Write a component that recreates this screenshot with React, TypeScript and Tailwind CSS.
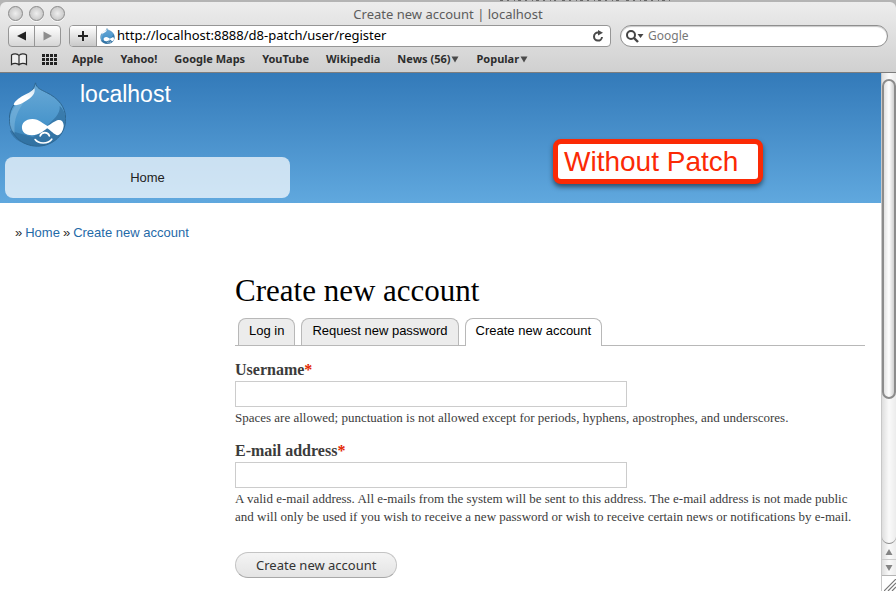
import type { ReactNode } from "react";

const bookmarks: { label: string; menu?: boolean }[] = [
  { label: "Apple" },
  { label: "Yahoo!" },
  { label: "Google Maps" },
  { label: "YouTube" },
  { label: "Wikipedia" },
  { label: "News (56)", menu: true },
  { label: "Popular", menu: true },
];

const tabs = [
  { label: "Log in", active: false },
  { label: "Request new password", active: false },
  { label: "Create new account", active: true },
];

function Druplicon({ className, id }: { className: string; id: string }) {
  return (
    <svg viewBox="27 20 172 195" className={className} aria-hidden="true">
      <defs>
        <linearGradient id={id} x1="0" y1="0" x2="0" y2="1">
          <stop offset="0" stopColor="#6aa9d6" />
          <stop offset="0.6" stopColor="#4a96cc" />
          <stop offset="1" stopColor="#3a80b4" />
        </linearGradient>
        <linearGradient id={id + "-shine"} x1="0.8" y1="0" x2="0.2" y2="1">
          <stop offset="0" stopColor="#d5e7f4" />
          <stop offset="0.5" stopColor="#ffffff" />
        </linearGradient>
      </defs>
      <path
        d="M107 22C110 38 122 42 140 51C176 68 198 95 198 130C198 178 160 213 113 213C65 213 28 178 28 130C28 98 48 75 75 62C92 52 102 42 107 22Z"
        fill={"url(#" + id + ")"}
        stroke="#2d6690"
        strokeWidth="3"
      />
      <path d="M180 91C183 118 158 134 142 152L100 186L29 166C40 196 74 212 113 212C160 212 197 178 197 130C197 115 191 101 180 91Z" fill="#2b6896" opacity="0.6" />
      <path d="M30 150C26 105 50 82 80 68C60 100 40 120 44 175C36 168 32 160 30 150Z" fill="#8bbfe0" opacity="0.45" />
      <path d="M104 38C96 48 80 55 65 63C50 72 42 82 41 88C50 92 64 86 79 76C95 66 108 54 104 38Z" fill={"url(#" + id + "-shine)"} />
      <path
        d="M98 131C75 131 66 145 66 156C66 172 78 180 96 180C118 180 130 168 142 159C152 164 164 180 174 180C186 178 192 160 192 150C191 138 185 133 176 134C166 135 153 148 143 152C130 146 118 131 98 131Z"
        fill="#fff"
      />
      <path d="M121 182C126 169 144 169 149 182" fill="none" stroke="#fff" strokeWidth="5" strokeLinecap="round" />
      <path d="M106 193C116 207 145 207 156 192" fill="none" stroke="#fff" strokeWidth="5" strokeLinecap="round" />
    </svg>
  );
}

function BrowserChrome() {
  return (
    <div className="bg-[#b4b4b4]">
      <svg viewBox="0 0 896 2" preserveAspectRatio="none" className="block h-0.5 w-full" aria-hidden="true">
        <path d="M500 0.5H556M562 0.5H620M626 0.5H670" stroke="#666" strokeWidth="1" strokeDasharray="3 4 2 5 1 3" />
      </svg>
      <header className="rounded-t-md border-b border-[#7d7d7d] bg-linear-to-b from-[#ededed] to-[#d0d0d0] font-['Noto_Sans',sans-serif]">
        <div className="relative flex h-[23px] items-center gap-1.5 pl-2">
          {["Close", "Minimise", "Zoom"].map((name) => (
            <button
              key={name}
              type="button"
              aria-label={name}
              className="size-[15px] rounded-full border border-[#8a8a8a] bg-radial from-[#eeeeee] to-[#bcbcbc] shadow-[0_1px_0_#fafafa]"
            />
          ))}
          <div className="pointer-events-none absolute inset-x-0 text-center text-[13px] leading-4 text-[#5c5c5c]">
            Create new account | localhost
          </div>
        </div>

        <div className="flex items-center px-2">
          <div className="flex h-[22px] w-[53px] rounded border border-[#969696] bg-linear-to-b from-white to-[#d6d6d6]">
            <button type="button" aria-label="Back" className="flex flex-1 items-center justify-center border-r border-[#969696]">
              <svg viewBox="0 0 10 10" className="size-2.5" aria-hidden="true"><path d="M0 5L9 0.5V9.5Z" fill="#222" /></svg>
            </button>
            <button type="button" aria-label="Forward" className="flex flex-1 items-center justify-center">
              <svg viewBox="0 0 10 10" className="size-2.5" aria-hidden="true"><path d="M9 5L0.5 0.5V9.5Z" fill="#8d8d8d" /></svg>
            </button>
          </div>
          <form className="ml-2 flex h-[22px] min-w-0 flex-1 overflow-hidden rounded border border-[#969696] bg-white">
            <button type="button" aria-label="Add bookmark" className="flex w-[27px] items-center justify-center border-r border-[#969696] bg-linear-to-b from-white to-[#c9c9c9]">
              <svg viewBox="0 0 10 10" className="size-2.5" aria-hidden="true"><path d="M5 0V10M0 5H10" stroke="#222" strokeWidth="2" /></svg>
            </button>
            <Druplicon id="favicon" className="ml-[3px] h-4 w-[15px] self-center" />
            <input
              type="text"
              aria-label="Address"
              defaultValue="http://localhost:8888/d8-patch/user/register"
              className="ml-0.5 min-w-0 flex-1 text-[13px] text-black outline-none"
            />
            <button type="button" aria-label="Reload" className="mr-1 flex w-4 items-center justify-center">
              <svg viewBox="0 0 12 12" className="size-3" aria-hidden="true">
                <path d="M7 2.6H6A4 4 0 1 0 10 7" fill="none" stroke="#4a4a4a" strokeWidth="2" />
                <path d="M6 0L11 2.8L6 5.6Z" fill="#4a4a4a" />
              </svg>
            </button>
          </form>
          <label className="ml-[9px] flex h-[22px] w-[268px] items-center rounded-full border border-[#8f8f8f] bg-white pl-[5px] shadow-[inset_0_1px_1px_#c8c8c8]">
            <svg viewBox="0 0 18 13" className="h-[13px] w-[18px]" aria-hidden="true">
              <circle cx="5" cy="5" r="4" fill="none" stroke="#444" strokeWidth="2" />
              <path d="M8 8L12 12" stroke="#444" strokeWidth="2.4" />
              <path d="M11.5 4H17.5L14.5 8Z" fill="#444" />
            </svg>
            <input type="text" aria-label="Search Google" placeholder="Google" className="ml-1 min-w-0 flex-1 text-xs outline-none placeholder:text-[#777]" />
          </label>
        </div>

        <nav className="flex h-[25px] items-center pl-2.5 text-[11px] font-bold text-[#2d2d2d]">
          <button type="button" aria-label="Show all bookmarks">
            <svg viewBox="0 0 18 13" className="h-[13px] w-[18px]" aria-hidden="true">
              <path d="M9 2.5C7.5 0.5 3.5 0.5 1.5 2V11.5C3.5 10 7.5 10 9 12C10.5 10 14.5 10 16.5 11.5V2C14.5 0.5 10.5 0.5 9 2.5V12" fill="#eee" stroke="#2d2d2d" strokeWidth="1.2" />
            </svg>
          </button>
          <button type="button" aria-label="Top sites" className="ml-3.5">
            <svg viewBox="0 0 16 12" className="h-3 w-4" aria-hidden="true">
              <path d="M0 1.5H16M0 5.5H16M0 9.5H16" stroke="#222" strokeWidth="3" strokeDasharray="3 1" />
            </svg>
          </button>
          <div className="ml-3.5 flex gap-[17px]">
            {bookmarks.map((b) => (
              <button key={b.label} type="button" className="flex items-center whitespace-nowrap">
                {b.label}
                {b.menu && (
                  <svg viewBox="0 0 8 7" className="ml-px h-[7px] w-2" aria-hidden="true"><path d="M0.5 0.5H7.5L4 6.5Z" fill="#4a4a4a" /></svg>
                )}
              </button>
            ))}
          </div>
        </nav>
      </header>
    </div>
  );
}

function Scrollbar() {
  return (
    <div className="flex w-[15px] shrink-0 flex-col border-l border-[#c8c8c8] bg-linear-to-r from-[#dedede] via-[#fafafa] to-[#ececec]" aria-hidden="true">
      <div className="flex flex-1 flex-col rounded-b-full border-b border-[#8a8a8a] pt-1.5">
        <div className="h-[69%] rounded-full border-2 border-[#8c8c8c] bg-linear-to-r from-[#e2e2e2] via-white to-[#cfcfcf]" />
      </div>
      <div className="flex h-4 items-center justify-center border-b border-[#cccccc]">
        <svg viewBox="0 0 8 6" className="h-1.5 w-2"><path d="M4 0L7.5 6H0.5Z" fill="#858585" /></svg>
      </div>
      <div className="flex h-4 items-center justify-center border-b border-[#b5b5b5]">
        <svg viewBox="0 0 8 6" className="h-1.5 w-2"><path d="M0.5 0H7.5L4 6Z" fill="#858585" /></svg>
      </div>
      <div className="flex h-[15px] items-end justify-end bg-white">
        <svg viewBox="0 0 12 12" className="size-3"><path d="M0 12L12 0M4 12L12 4M8 12L12 8" stroke="#777" strokeWidth="1.2" /></svg>
      </div>
    </div>
  );
}

function Field({ id, label, type, children }: { id: string; label: string; type: string; children: ReactNode }) {
  return (
    <div className="flex flex-col items-start">
      <label htmlFor={id} className="text-base leading-5 font-bold text-[#3b3b3b]">
        {label}
        <span className="text-[#e32700]">*</span>
      </label>
      <input id={id} type={type} aria-describedby={id + "-help"} className="mt-px h-[26px] w-[392px] max-w-full border border-[#cccccc] bg-white px-1 text-sm outline-none" />
      <p id={id + "-help"} className="mt-0.5 text-[13px] leading-[18px] text-[#3b3b3b]">
        {children}
      </p>
    </div>
  );
}

export default function App() {
  return (
    <div className="flex min-h-screen flex-col bg-white">
      <BrowserChrome />
      <div className="flex flex-1">
        <div className="min-w-0 flex-1 font-['Liberation_Sans',Arial,sans-serif] text-[13px]">
          <div className="relative bg-linear-to-b from-[#337ab9] to-[#60a8de] px-[5px] pb-[5px]">
            <div className="flex items-start gap-3.5 pt-[9px] pl-1">
              <a href="#home" aria-label="localhost home"><Druplicon id="logo" className="h-[65px] w-[57px]" /></a>
              <a href="#home" className="text-[23px] leading-6 text-white">localhost</a>
            </div>
            <a href="#home" className="mt-2.5 flex h-[41px] w-[285px] items-center justify-center rounded-lg bg-white/70 text-[#222]">
              Home
            </a>
            <div className="absolute top-[66px] left-[553px] w-[210px] rounded-lg border-[5px] border-[#fb2a05] bg-white px-1.5 text-[28px] leading-[35px] whitespace-nowrap text-[#fb2a05] shadow-[0_3px_5px_rgba(0,0,0,0.5)]">
              Without Patch
            </div>
          </div>

          <nav aria-label="Breadcrumb" className="mt-5 flex gap-[3px] pl-[15px] leading-[20px] text-[#2b2b2b]">
            <span>»</span>
            <a href="#home" className="text-[#1f6aa8]">Home</a>
            <span>»</span>
            <a href="#register" className="text-[#1f6aa8]">Create new account</a>
          </nav>

          <main className="mt-7 pr-4 pb-3 pl-[235px]">
            <h1 className="font-['Liberation_Serif',Georgia,serif] text-[31px] leading-10 text-black">Create new account</h1>
            <nav aria-label="Account" className="mt-[7px] flex gap-1.5 border-b border-[#b8b8b8] pl-[3px]">
              {tabs.map((t) => (
                <a
                  key={t.label}
                  href="#tab"
                  className={
                    t.active
                      ? "-mb-px rounded-t-lg border border-b-0 border-[#b8b8b8] bg-white px-2.5 pb-[3px] leading-6 text-black"
                      : "rounded-t-lg border border-b-0 border-[#b8b8b8] bg-[#ececec] px-2.5 leading-6 text-black"
                  }
                >
                  {t.label}
                </a>
              ))}
            </nav>
            <form className="mt-3.5 flex flex-col items-start gap-3.5 font-['Liberation_Serif',Georgia,serif]">
              <Field id="username" label="Username" type="text">
                Spaces are allowed; punctuation is not allowed except for periods, hyphens, apostrophes, and underscores.
              </Field>
              <Field id="email" label="E-mail address" type="email">
                A valid e-mail address. All e-mails from the system will be sent to this address. The e-mail address is not made public and
                will only be used if you wish to receive a new password or wish to receive certain news or notifications by e-mail.
              </Field>
              <button
                type="button"
                className="mt-3 h-[26px] rounded-full border border-[#c4c4c4] border-b-[#a8a8a8] bg-linear-to-b from-[#f4f4f4] to-[#e4e4e4] px-5 font-['Noto_Sans',sans-serif] text-[13px] leading-5 text-[#333]"
              >
                Create new account
              </button>
            </form>
          </main>
        </div>
        <Scrollbar />
      </div>
    </div>
  );
}
